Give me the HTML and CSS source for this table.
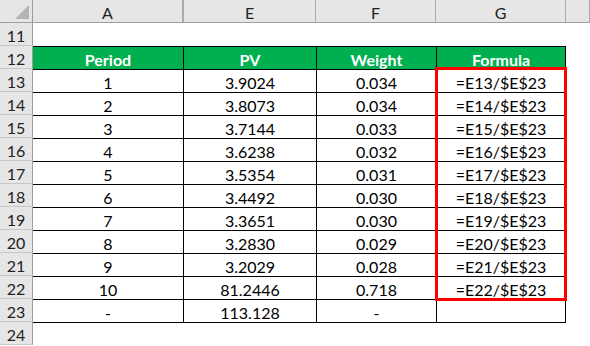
FILE: index.html
```html
<!DOCTYPE html>
<html lang="en">
<head>
    <title>Weight Formula</title>
    <link rel="stylesheet" href="styles.css">
</head>
<body>
    <div class="sheet">
        <div class="corner"></div>
        <div class="ch">A</div>
        <div class="ch hid">E</div>
        <div class="ch">F</div>
        <div class="ch">G</div>
        <div class="ch"></div>

        <div class="rh">11</div><div></div><div></div><div></div><div></div><div></div>

        <div class="rh">12</div>
        <div class="c head">Period</div>
        <div class="c l head">PV</div>
        <div class="c l head">Weight</div>
        <div class="c l g head">Formula</div>
        <div></div>

        <div class="rh">13</div><div class="c">1</div><div class="c l">3.9024</div><div class="c l">0.034</div><div class="c l g">=E13/$E$23</div><div></div>
        <div class="rh">14</div><div class="c">2</div><div class="c l">3.8073</div><div class="c l">0.034</div><div class="c l g">=E14/$E$23</div><div></div>
        <div class="rh">15</div><div class="c">3</div><div class="c l">3.7144</div><div class="c l">0.033</div><div class="c l g">=E15/$E$23</div><div></div>
        <div class="rh">16</div><div class="c">4</div><div class="c l">3.6238</div><div class="c l">0.032</div><div class="c l g">=E16/$E$23</div><div></div>
        <div class="rh">17</div><div class="c">5</div><div class="c l">3.5354</div><div class="c l">0.031</div><div class="c l g">=E17/$E$23</div><div></div>
        <div class="rh">18</div><div class="c">6</div><div class="c l">3.4492</div><div class="c l">0.030</div><div class="c l g">=E18/$E$23</div><div></div>
        <div class="rh">19</div><div class="c">7</div><div class="c l">3.3651</div><div class="c l">0.030</div><div class="c l g">=E19/$E$23</div><div></div>
        <div class="rh">20</div><div class="c">8</div><div class="c l">3.2830</div><div class="c l">0.029</div><div class="c l g">=E20/$E$23</div><div></div>
        <div class="rh">21</div><div class="c">9</div><div class="c l">3.2029</div><div class="c l">0.028</div><div class="c l g">=E21/$E$23</div><div></div>
        <div class="rh">22</div><div class="c">10</div><div class="c l">81.2446</div><div class="c l">0.718</div><div class="c l g">=E22/$E$23</div><div></div>
        <div class="rh">23</div><div class="c">-</div><div class="c l">113.128</div><div class="c l">-</div><div class="c l g"></div><div></div>

        <div class="rh">24</div><div class="end"></div><div class="end"></div><div class="end"></div><div class="end"></div><div></div>

        <div class="highlight"></div>
    </div>
</body>
</html>
```

FILE: styles.css
```css
body {
    margin: 0px;
    background-color: #ffffff;
    font-family: Lato, "Open Sans", sans-serif;
}
.sheet {
    position: relative;
    display: grid;
    grid-template-columns: 33px 150px 133px 120px 130px 24px;
    grid-auto-rows: 23px;
    font-size: 16px;
    color: #000000;
}
.sheet > div {
    box-sizing: border-box;
    display: flex;
    align-items: center;
    justify-content: center;
    padding-top: 2px;
}
.corner {
    position: relative;
    background: #e6e6e6;
    border-right: 1px solid #9e9e9e;
    border-bottom: 1px solid #9e9e9e;
}
.corner::after {
    content: "";
    position: absolute;
    right: 3px;
    bottom: 3px;
    width: 0;
    height: 0;
    border-left: 14px solid transparent;
    border-bottom: 14px solid #b4b4b4;
}
.ch {
    background: #e6e6e6;
    color: #222222;
    border-right: 1px solid #ababab;
    border-bottom: 1px solid #9e9e9e;
}
.ch.hid {
    border-left: 1px solid #ababab;
}
.rh {
    background: #e6e6e6;
    color: #222222;
    border-right: 1px solid #9e9e9e;
    border-bottom: 1px solid #c8c8c8;
}
.c {
    border-top: 1px solid #000000;
}
.c.l {
    border-left: 1px solid #000000;
}
.c.g {
    border-right: 1px solid #000000;
}
.head {
    background: #00b050;
    color: #ffffff;
    font-weight: bold;
}
.end {
    border-top: 1px solid #000000;
}
.highlight {
    position: absolute;
    left: 435px;
    top: 67px;
    width: 132px;
    height: 234px;
    box-sizing: border-box;
    border: 3px solid #ff0000;
}
```
